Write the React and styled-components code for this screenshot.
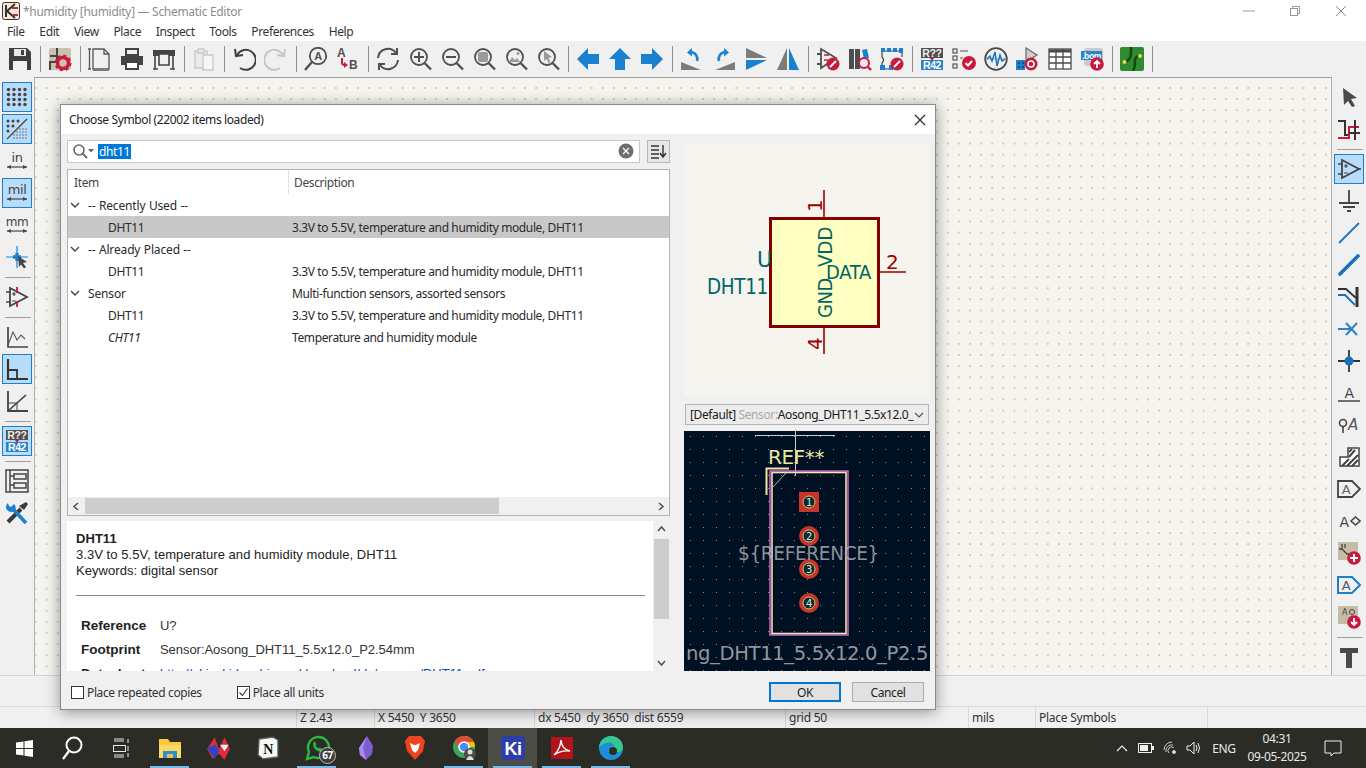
import React from "react";
import styled, { createGlobalStyle } from "styled-components";

const GlobalStyle = createGlobalStyle`
  html, body { margin: 0; padding: 0; background: #f0f0f0; overflow: hidden; }
  * { box-sizing: border-box; }
  body { font-family: "Noto Sans", "Open Sans", sans-serif; font-size: 12px; color: #1a1a1a; }
`;

const Page = styled.div`
  width: 1366px;
  height: 768px;
  position: relative;
  display: flex;
  flex-direction: column;
  overflow: hidden;
  letter-spacing: -0.38px;
`;

const TitleBar = styled.div`
  height: 22px;
  background: #fff;
  display: flex;
  align-items: center;
  padding: 0 2px 0 2px;
  color: #8c8c8c;
`;

const TitleText = styled.span`
  margin-left: 3px;
  flex: 1;
  letter-spacing: -0.3px;
`;

const WinButton = styled.div`
  width: 46px;
  height: 22px;
  display: flex;
  align-items: center;
  justify-content: center;
`;

const MenuBar = styled.div`
  height: 19px;
  background: #fff;
  display: flex;
  align-items: center;
  padding-left: 7px;
  gap: 14.7px;
  color: #333;
`;

const TopTools = styled.div`
  height: 36px;
  background: #f0f0f0;
  display: flex;
  align-items: center;
  padding-left: 4px;
`;

const Btn = styled.div`
  width: 32px;
  height: 32px;
  display: flex;
  align-items: center;
  justify-content: center;
  position: relative;
  &::before {
    content: "";
    display: ${(p) => (p.$active ? "block" : "none")};
    position: absolute;
    inset: 1px;
    background: #b9dcfb;
    border: 1.5px solid #1a7fd0;
  }
  & > svg { position: relative; }
`;

const VSep = styled.div`
  width: 8px;
  height: 26px;
  display: flex;
  justify-content: center;
  &::after { content: ""; width: 1px; background: #909090; }
`;

const HSep = styled.div`
  height: 8px;
  display: flex;
  align-items: center;
  justify-content: center;
  &::after { content: ""; height: 1px; width: 26px; background: #a0a0a0; }
`;

const Middle = styled.div`
  flex: 1;
  display: flex;
  min-height: 0;
`;

const SideTools = styled.div`
  width: ${(p) => p.$w}px;
  padding-top: 4px;
  padding-left: 1px;
  background: #f0f0f0;
`;

const Canvas = styled.div`
  flex: 1;
  border-top: 1px solid #a0a0a0;
  border-left: 1px solid #b0b0b0;
  border-right: 1px solid #b0b0b0;
  background-color: #f5f4ef;
  background-image: radial-gradient(circle at 1px 1px, #cac7be 0.7px, transparent 1px);
  background-size: 11.13px 11.13px;
  background-position: -0.5px 9px;
`;

const MessageBar = styled.div`
  height: 31px;
  background: #f0f0f0;
  border-top: 1px solid #d4d4d4;
`;

const StatusBar = styled.div`
  height: 22px;
  background: #f0f0f0;
  border-top: 1px solid #dcdcdc;
  display: flex;
  color: #333;
  letter-spacing: -0.25px;
`;

const StatusCell = styled.div`
  width: ${(p) => p.$w}px;
  display: flex;
  align-items: center;
  padding-left: 3px;
  border-left: ${(p) => (p.$first ? "none" : "1px solid #d8d8d8")};
  white-space: pre;
`;

const Taskbar = styled.div`
  height: 40px;
  background: #2b2c25;
  display: flex;
  align-items: center;
  color: #e8e8e8;
`;

const TaskBtn = styled.div`
  width: ${(p) => p.$w || 49}px;
  height: 40px;
  display: flex;
  align-items: center;
  justify-content: center;
  position: relative;
  background: ${(p) => (p.$active ? "#4b4c46" : "transparent")};
  &::after {
    content: "";
    display: ${(p) => (p.$running ? "block" : "none")};
    position: absolute;
    left: 5px;
    right: 5px;
    bottom: 0;
    height: 2px;
    background: #76b9ed;
  }
`;

const TaskBadge = styled.span`
  position: absolute;
  left: 27px;
  top: 19px;
  width: 17px;
  height: 17px;
  border-radius: 50%;
  background: #3c3c3c;
  border: 1px solid #bdbdbd;
  color: #fff;
  font-size: 10px;
  font-weight: 700;
  line-height: 15px;
  text-align: center;
  letter-spacing: -0.5px;
`;

const Tray = styled.div`
  margin-left: auto;
  display: flex;
  align-items: center;
  height: 40px;
  padding-right: 14px;
`;

const TrayIcon = styled.div`
  width: 24px;
  display: flex;
  justify-content: center;
`;

const TrayLang = styled.span`
  width: 36px;
  text-align: center;
  font-size: 12px;
`;

const Clock = styled.div`
  width: 70px;
  text-align: center;
  font-size: 12px;
  line-height: 18px;
`;

const Notify = styled.div`
  width: 38px;
  margin-left: 2px;
  display: flex;
  justify-content: center;
`;

const Dialog = styled.div`
  position: absolute;
  left: 60px;
  top: 104px;
  width: 876px;
  height: 606px;
  background: #f0f0f0;
  border: 1px solid #8a8a8a;
  box-shadow: 0 2px 14px rgba(0, 0, 0, 0.4);
  display: flex;
  flex-direction: column;
`;

const DialogTitle = styled.div`
  height: 29px;
  background: #fff;
  display: flex;
  align-items: center;
  justify-content: space-between;
  padding: 0 9px 0 8px;
  color: #222;
`;

const DialogBody = styled.div`
  flex: 1;
  min-height: 0;
  display: flex;
  padding: 5px 5px 0 6px;
  gap: 14px;
`;

const LeftPane = styled.div`
  width: 603px;
  display: flex;
  flex-direction: column;
`;

const SearchRow = styled.div`
  display: flex;
  height: 23px;
  flex-shrink: 0;
  gap: 7px;
  margin-top: 1px;
`;

const SearchBox = styled.div`
  flex: 1;
  background: #fff;
  border: 1px solid #c8c8c8;
  display: flex;
  align-items: center;
  padding: 0 5px 1px 4px;
`;

const Selected = styled.span`
  background: #0078d7;
  color: #fff;
  margin-left: 3px;
  padding: 0 1px;
  line-height: 15px;
`;

const ClearIcon = styled.svg`
  width: 16px;
  height: 16px;
  margin-left: auto;
`;

const SortBtn = styled.div`
  width: 23px;
  border: 1px solid #b8b8b8;
  background: #e6e6e6;
  display: flex;
  align-items: center;
  justify-content: center;
`;

const TreeBox = styled.div`
  height: 347px;
  flex-shrink: 0;
  margin-top: 6px;
  background: #fff;
  border: 1px solid #b4b4b4;
  display: flex;
  flex-direction: column;
`;

const TreeHead = styled.div`
  height: 24px;
  display: flex;
  color: #444;
`;

const HeadCell = styled.div`
  width: ${(p) => p.$w};
  padding-left: ${(p) => p.$pl}px;
  display: flex;
  align-items: center;
  border-right: ${(p) => (p.$line ? "1px solid #e4e4e4" : "none")};
`;

const Rows = styled.div`
  flex: 1;
`;

const Row = styled.div`
  height: 22px;
  display: flex;
  align-items: center;
  background: ${(p) => (p.$selected ? "#c8c8c8" : "transparent")};
  color: #2a2a2a;
`;

const RowItem = styled.div`
  width: 224px;
  display: flex;
  align-items: center;
  padding-left: ${(p) => (p.$group ? 2 : 40)}px;
  letter-spacing: ${(p) => (p.$group ? "-0.15px" : "inherit")};
  word-spacing: ${(p) => (p.$group ? "0.5px" : "normal")};
  font-style: ${(p) => (p.$italic ? "italic" : "normal")};
`;

const Chevron = styled.svg`
  width: 10px;
  height: 10px;
  margin-right: 8px;
`;

const HScroll = styled.div`
  height: 18px;
  background: #f0f0f0;
  display: flex;
  align-items: center;
`;

const ScrollArrow = styled.div`
  width: 17px;
  height: 17px;
  display: flex;
  align-items: center;
  justify-content: center;
`;

const HTrack = styled.div`
  flex: 1;
  height: 16px;
`;

const HThumb = styled.div`
  width: 414px;
  height: 100%;
  background: #cdcdcd;
`;

const Details = styled.div`
  height: 150px;
  flex-shrink: 0;
  margin-top: 5px;
  background: #fff;
  display: flex;
  overflow: hidden;
`;

const DetailsText = styled.div`
  flex: 1;
  overflow: hidden;
  padding: 10px 9px 0 9px;
  font-family: "Liberation Sans", Arial, sans-serif;
  font-size: 13px;
  line-height: 16px;
  letter-spacing: 0.05px;
  color: #222;
`;

const DetailsName = styled.div`
  font-weight: 700;
`;

const DetailsRule = styled.hr`
  border: 0;
  border-top: 1px solid #888;
  margin: 16px 0 18px;
`;

const Field = styled.div`
  display: flex;
  height: 24px;
  padding-left: 5px;
  align-items: center;
  white-space: nowrap;
`;

const FieldName = styled.span`
  width: 79px;
  font-weight: 700;
  font-size: 13.5px;
  letter-spacing: 0;
`;

const FieldValue = styled.span`
  color: ${(p) => p.$color || "#333"};
  letter-spacing: -0.05px;
`;

const VScroll = styled.div`
  width: 17px;
  margin-left: -1px;
  background: #f0f0f0;
  display: flex;
  flex-direction: column;
`;

const VThumb = styled.div`
  height: 80px;
  margin: 1px 1px 0;
  background: #cdcdcd;
`;

const VSpace = styled.div`
  flex: 1;
`;

const RightPane = styled.div`
  width: 246px;
  display: flex;
  flex-direction: column;
  padding-top: 5px;
`;

const SymbolPreview = styled.svg`
  width: 246px;
  height: 253px;
  flex-shrink: 0;
  display: block;
`;

const FootprintSelect = styled.div`
  height: 21px;
  flex-shrink: 0;
  margin: 7px 1px 6px;
  background: #ececec;
  border: 1px solid #b4b4b4;
  display: flex;
  align-items: center;
  padding: 0 4px;
  justify-content: space-between;
  white-space: pre;
`;

const Faded = styled.span`
  color: #aaa;
`;

const FootprintPreview = styled.svg`
  width: 246px;
  height: 240px;
  flex-shrink: 0;
  display: block;
`;

const DialogFoot = styled.div`
  height: 38px;
  flex-shrink: 0;
  display: flex;
  align-items: center;
  padding: 4px 11px 0 10px;
`;

const CheckLabel = styled.label`
  display: flex;
  align-items: center;
  gap: 3px;
  color: #333;
  margin-right: ${(p) => p.$mr || 0}px;
`;

const CheckBox = styled.span`
  width: 13px;
  height: 13px;
  border: 1px solid #333;
  background: #fff;
  display: flex;
  align-items: center;
  justify-content: center;
`;

const PushButton = styled.div`
  width: 72px;
  height: 20px;
  background: #e1e1e1;
  border: ${(p) => (p.$primary ? "2px solid #0078d7" : "1px solid #adadad")};
  display: flex;
  align-items: center;
  justify-content: center;
  margin-left: ${(p) => p.$ml};
  color: #222;
`;

const D = "#505050";
const BL = "#1a80d0";
const R = "#c8193f";

const Glyph = ({ children, size = 24 }) => (
  <svg width={size} height={size} viewBox="0 0 24 24">
    {children}
  </svg>
);

const Mag = ({ color = D }) => (
  <g fill="none" stroke={color} strokeWidth="1.8">
    <circle cx="11" cy="10" r="8" />
    <path d="M16.5 16 L23 22.5" strokeWidth="2.4" />
  </g>
);

const Badge = ({ cx = 18, cy = 18, r = 6, color = R }) => <circle cx={cx} cy={cy} r={r} fill={color} />;

const icons = {
  save: (
    <>
      <path d="M1 1h18l4 4v18H1z" fill="#3f3f3f" />
      <rect x="6" y="2" width="12" height="7" fill="#e8e8e8" />
      <rect x="13" y="3" width="3" height="5" fill="#3f3f3f" />
      <rect x="5" y="14" width="14" height="9" fill="#f0f0f0" />
    </>
  ),
  gear: (
    <>
      <rect x="1" y="1" width="22" height="22" rx="2" fill="#c9c2ad" />
      <path d="M9 1v8H2M9 15H2v8M9 9v6" stroke="#444" strokeWidth="2" fill="none" />
      <circle cx="15" cy="16" r="5.5" fill="none" stroke={R} strokeWidth="3.5" />
      <circle cx="15" cy="16" r="7.5" fill="none" stroke={R} strokeWidth="2" strokeDasharray="3 2.9" />
    </>
  ),
  page: (
    <g fill="none" stroke="#555" strokeWidth="1.3">
      <path d="M5 2h11l5 5v15H5z" />
      <path d="M16 2v5h5" />
      <path d="M1.5 2v20M0 2h3M0 22h3M5 24h16" />
    </g>
  ),
  print: (
    <>
      <path d="M6 2h12v6H6z" fill="none" stroke="#444" strokeWidth="2" />
      <path d="M1 9h22v9h-4v-3H5v3H1z" fill="#444" />
      <path d="M6 15h12v7H6z" fill="#fff" stroke="#444" strokeWidth="2" />
    </>
  ),
  plot: (
    <>
      <path d="M1 3h22v6H1z" fill="#444" />
      <path d="M3 9v13M21 9v13M1 22h5M18 22h5" stroke="#444" strokeWidth="1.6" fill="none" />
      <path d="M7 7h10v11H7z" fill="#f0f0f0" stroke="#444" strokeWidth="1.6" />
    </>
  ),
  paste: (
    <g fill="#ebebeb" stroke="#c8c8c8" strokeWidth="1.3">
      <path d="M3 4h12v17H3z" />
      <path d="M11 8h10v15H11z" fill="#f5f5f5" />
      <path d="M6 2h6v4H6z" />
    </g>
  ),
  undo: (
    <g fill="none" stroke="#404040" strokeWidth="2">
      <path d="M5 8 A10 10 0 1 1 8 21" />
      <path d="M3 2 L4 9 L11 8" />
    </g>
  ),
  redo: (
    <g fill="none" stroke="#c6c6c6" strokeWidth="2">
      <path d="M19 8 A10 10 0 1 0 16 21" />
      <path d="M21 2 L20 9 L13 8" />
    </g>
  ),
  find: (
    <>
      <g fill="none" stroke={D} strokeWidth="1.8">
        <circle cx="14" cy="9" r="8.2" />
        <path d="M8 15 L1 23" strokeWidth="2.4" />
      </g>
      <text x="14" y="13" textAnchor="middle" fontSize="11" fontWeight="700" fill={D} fontFamily="Liberation Sans">A</text>
    </>
  ),
  replace: (
    <>
      <text x="1" y="10" fontSize="12" fontWeight="700" fill={D} fontFamily="Liberation Sans">A</text>
      <text x="13" y="22" fontSize="12" fontWeight="700" fill={D} fontFamily="Liberation Sans">B</text>
      <path d="M6 11 v5 q0 2 3 2" fill="none" stroke={R} strokeWidth="2" />
      <path d="M8 15 l4 3 l-4 3z" fill={R} />
    </>
  ),
  refresh: (
    <g fill="none" stroke={D} strokeWidth="2">
      <path d="M2 11 A10 10 0 0 1 20 6" />
      <path d="M22 13 A10 10 0 0 1 4 18" />
      <path d="M21 1 V7 H15" />
      <path d="M3 23 V17 H9" />
    </g>
  ),
  zoomIn: (
    <>
      <Mag />
      <path d="M11 5v10M6 10h10" stroke={D} strokeWidth="2" />
    </>
  ),
  zoomOut: (
    <>
      <Mag />
      <path d="M6 10h10" stroke={D} strokeWidth="2" />
    </>
  ),
  zoomFit: (
    <>
      <Mag />
      <rect x="6" y="5" width="10" height="10" rx="2" fill="#9a9a9a" />
    </>
  ),
  zoomObj: (
    <>
      <Mag />
      <path d="M5 15l3-5 3 3 2-2 3 4z" fill="#9a9a9a" />
      <circle cx="14" cy="6.5" r="1.5" fill="#9a9a9a" />
    </>
  ),
  zoomSel: (
    <>
      <Mag />
      <path d="M8 4l8 6-3.5 1 2 4-2 1-2-4L8 14z" fill="#9a9a9a" />
    </>
  ),
  left: <path d="M1 12 L12 1 V7 H23 V17 H12 V23z" fill={BL} />,
  up: <path d="M12 1 L23 12 H17 V23 H7 V12 H1z" fill={BL} />,
  right: <path d="M23 12 L12 1 V7 H1 V17 H12 V23z" fill={BL} />,
  rotCcw: (
    <>
      <path d="M1 23 V15 L21 23z" fill="#7c7c7c" />
      <path d="M17 14 A7 7 0 0 0 11 5" fill="none" stroke={BL} strokeWidth="2.6" />
      <path d="M12 1 L7 5.5 L12 9.5z" fill={BL} />
    </>
  ),
  rotCw: (
    <>
      <path d="M23 23 V15 L3 23z" fill="#7c7c7c" />
      <path d="M7 14 A7 7 0 0 1 13 5" fill="none" stroke={BL} strokeWidth="2.6" />
      <path d="M12 1 L17 5.5 L12 9.5z" fill={BL} />
    </>
  ),
  mirrorV: (
    <>
      <path d="M2 1 L23 11 H2z" fill="#7c7c7c" />
      <path d="M2 23 L23 13 H2z" fill={BL} />
    </>
  ),
  mirrorH: (
    <>
      <path d="M11 1 V23 H1z" fill="#7c7c7c" />
      <path d="M13 1 V23 H23z" fill={BL} />
    </>
  ),
  symCheck: (
    <>
      <path d="M5 2 V21 L20 11z" fill="none" stroke={D} strokeWidth="1.8" />
      <path d="M1 7h4M1 17h4" stroke={D} strokeWidth="1.8" />
      <path d="M8 8h5M8 13h4" stroke={R} strokeWidth="1.5" />
      <Badge cx={17} cy={17} r={6.5} />
      <path d="M14 20 L20 14" stroke="#fff" strokeWidth="2" />
    </>
  ),
  libs: (
    <>
      <path d="M1 2h5v20H1zM7 2h5v20H7z" fill="#4d4d4d" />
      <path d="M14 3l5-1 2 9-5 1z" fill={BL} />
      <circle cx="16" cy="16" r="5" fill="#f0e6ee" stroke={R} strokeWidth="2" />
      <path d="M20 20l3 3" stroke={R} strokeWidth="2.4" />
    </>
  ),
  hierCheck: (
    <>
      <path d="M3 4h18M2 4v6q3 3 0 6v6M3 22h6M22 4v6" fill="none" stroke="#444" strokeWidth="1.2" />
      <path d="M1 1h4v4H1zM7 1h4v4H7zM13 1h4v4h-4zM19 1h4v5h-4zM0 18h5v5H0zM9 18h4v5H9z" fill={BL} />
      <Badge cx={17} cy={17} r={6.5} />
      <path d="M14 20 L20 14" stroke="#fff" strokeWidth="2" />
    </>
  ),
  annotate: (
    <>
      <rect x="1" y="1" width="22" height="10" fill="#505050" />
      <rect x="1" y="13" width="22" height="10" fill="#2b84c9" />
      <text x="12" y="10" textAnchor="middle" fontSize="10.5" fontWeight="700" fill="#eee" fontFamily="Liberation Sans">R??</text>
      <text x="12" y="22" textAnchor="middle" fontSize="10.5" fontWeight="700" fill="#fff" fontFamily="Liberation Sans">R42</text>
      <path d="M9.5 10.5 H14.5 L12 14z" fill={R} />
    </>
  ),
  erc: (
    <>
      <g fill="none" stroke="#555" strokeWidth="1.2">
        <rect x="1" y="2" width="4" height="4" />
        <rect x="1" y="9" width="4" height="4" />
        <rect x="1" y="17" width="4" height="4" />
      </g>
      <path d="M8 4h8M8 11h3" stroke="#555" strokeWidth="1.2" />
      <Badge cx={17} cy={16} r={7} />
      <path d="M13.5 16l2.5 2.5 4-4.5" fill="none" stroke="#fff" strokeWidth="2" />
    </>
  ),
  sim: (
    <>
      <circle cx="12" cy="12" r="10.8" fill="none" stroke="#4a4a4a" strokeWidth="1.8" />
      <path d="M3 12 H22" stroke="#999" strokeWidth="1" />
      <path d="M3 12 L6 9 L8 14 L11 5 L13 19 L16 8 L18 14 L21 12" fill="none" stroke="#1c74b8" strokeWidth="1.5" />
    </>
  ),
  fpAssign: (
    <>
      <path d="M10 1 V15 L21 8z" fill="#cfcfcf" stroke="#666" strokeWidth="1.2" />
      <path d="M0 13h9v10H0z" fill={BL} />
      <path d="M2 15h2v2H2zM6 15h2v2H6zM2 19h2v2H2zM6 19h2v2H6z" fill="#13507f" />
      <Badge cx={15} cy={17} r={6.5} />
      <circle cx="15" cy="17" r="3" fill="none" stroke="#fff" strokeWidth="1.6" />
    </>
  ),
  table: (
    <g fill="#fff" stroke="#4a4a4a" strokeWidth="1.3">
      <rect x="1" y="2" width="22" height="20" />
      <path d="M1 4h22" strokeWidth="3" />
      <path d="M1 10h22M1 16h22M8 2v20M15 2v20" />
    </g>
  ),
  bom: (
    <>
      <rect x="4" y="1" width="19" height="18" rx="3" fill="#c9c9cf" />
      <rect x="1" y="4" width="21" height="9" fill="#2b84c9" />
      <text x="11.5" y="11.5" textAnchor="middle" fontSize="8.5" fontWeight="700" fill="#fff" fontFamily="Liberation Sans">.bom</text>
      <Badge cx={17} cy={17} r={6.8} />
      <path d="M17 21v-7M14 17l3-3 3 3" fill="none" stroke="#fff" strokeWidth="1.8" />
    </>
  ),
  pcb: (
    <>
      <rect x="0" y="0" width="24" height="24" rx="2" fill="#2f8a30" />
      <path d="M5 15 Q11 13 11 6 V0 M19 9 Q14 10 15 16 Q15 20 13 24" fill="none" stroke="#0d4d12" strokeWidth="2.5" />
      <circle cx="4.5" cy="15" r="2" fill="#e8d84a" />
      <circle cx="20" cy="9" r="2" fill="#e8d84a" />
    </>
  ),
  gridDots: (
    <g fill="#444">
      {[4, 9, 14, 19].map((y) =>
        [3, 8.5, 14, 19.5].map((x) => <circle key={`${x}-${y}`} cx={x + 0.5} cy={y + 0.5} r="1.7" />),
      )}
    </g>
  ),
  gridOverride: (
    <>
      <g fill="#444">
        {[4, 9, 14].map((y) => [3, 8, 13].map((x) => (x + y < 20 ? <circle key={`${x}-${y}`} cx={x} cy={y} r="1.5" /> : null)))}
      </g>
      <g fill="#666">
        {[12, 15, 18, 21].map((y) =>
          [9, 12, 15, 18, 21].map((x) => (x + y > 26 ? <circle key={`${x}-${y}`} cx={x} cy={y} r="0.8" /> : null)),
        )}
      </g>
      <path d="M2 22 L22 2" stroke="#444" strokeWidth="1.3" />
    </>
  ),
  unitIn: (
    <>
      <text x="12" y="13" textAnchor="middle" fontSize="13" fontFamily="DejaVu Sans" fill="#444">in</text>
      <path d="M2 18 H22" stroke="#444" strokeWidth="1.2" />
      <path d="M2 18 l4-2v4zM22 18 l-4-2v4z" fill="#444" />
    </>
  ),
  unitMil: (
    <>
      <text x="12" y="13" textAnchor="middle" fontSize="13" fontFamily="DejaVu Sans" fill="#444">mil</text>
      <path d="M2 18 H22" stroke="#444" strokeWidth="1.2" />
      <path d="M2 18 l4-2v4zM22 18 l-4-2v4z" fill="#444" />
    </>
  ),
  unitMm: (
    <>
      <text x="12" y="13" textAnchor="middle" fontSize="12" fontFamily="DejaVu Sans" fill="#444">mm</text>
      <path d="M2 18 H22" stroke="#444" strokeWidth="1.2" />
      <path d="M2 18 l4-2v4zM22 18 l-4-2v4z" fill="#444" />
    </>
  ),
  crosshair: (
    <>
      <path d="M12 1 V23 M1 12 H23" stroke={BL} strokeWidth="1.2" />
      <path d="M12 8 V16 M8 12 H16" stroke={BL} strokeWidth="3.4" />
      <path d="M13 11 L22 17 L18 18 L21 22 L19 23.5 L16 19.5 L14 22z" fill="#454545" />
    </>
  ),
  opamp: (
    <>
      <path d="M5 3 V21 L22 12z" fill="none" stroke="#444" strokeWidth="1.8" />
      <path d="M1 7h4M1 17h4" stroke="#444" strokeWidth="1.6" />
      <path d="M12 2v6M12 16v6" stroke={R} strokeWidth="1.8" />
      <path d="M7 9h4M9 7v4M7 16h4" stroke="#444" strokeWidth="1.2" />
    </>
  ),
  plotFree: (
    <>
      <path d="M3 2 V22 H23" fill="none" stroke="#444" strokeWidth="1.7" />
      <path d="M3 20 L8 7 L12 15 L16 10 L20 14" fill="none" stroke="#555" strokeWidth="1.1" />
    </>
  ),
  plotH: (
    <>
      <path d="M3 2 V22 H23" fill="none" stroke="#333" strokeWidth="2.2" />
      <path d="M3 13 H12 V22" fill="none" stroke="#333" strokeWidth="1.8" />
    </>
  ),
  plot45: (
    <>
      <path d="M3 2 V22 H23" fill="none" stroke="#444" strokeWidth="1.8" />
      <path d="M3 22 L21 6" fill="none" stroke="#444" strokeWidth="1.6" />
      <path d="M3 14 H12 V22" fill="none" stroke="#444" strokeWidth="1" />
    </>
  ),
  hierNav: (
    <g fill="none" stroke="#444" strokeWidth="1.5">
      <rect x="1" y="1" width="22" height="22" />
      <path d="M5 1v22" />
      <rect x="9" y="5" width="12" height="5" />
      <rect x="9" y="14" width="12" height="5" />
      <path d="M5 7h4M5 16h4" />
    </g>
  ),
  tools: (
    <>
      <path d="M3 21 L16 8" stroke="#3a3a3a" strokeWidth="4" />
      <path d="M14 5 L21 1 L23 3 L19 9z" fill="#3a3a3a" />
      <path d="M21 22 L8 8" stroke={BL} strokeWidth="3.6" />
      <path d="M3 2 A5.5 5.5 0 0 0 2 9 A5.5 5.5 0 0 0 9.5 10 A5.5 5.5 0 0 0 9 3 L6 6 L4 5z" fill={BL} />
    </>
  ),
  cursor: <path d="M6 3 L20 13 L14 14 L18 21 L15 22 L11 16 L7 20z" fill="#4a4a4a" />,
  route: (
    <>
      <path d="M1 4h7v14h4" fill="none" stroke="#333" strokeWidth="2" />
      <path d="M1 21h11V10h10" fill="none" stroke={R} strokeWidth="2" />
      <path d="M18 3v20M12 16h11" stroke="#333" strokeWidth="2" />
    </>
  ),
  symbol: (
    <>
      <path d="M5 3 V21 L22 12z" fill="none" stroke="#444" strokeWidth="1.8" />
      <path d="M1 7h4M1 17h4M22 12h2" stroke="#444" strokeWidth="1.6" />
      <path d="M7 9h4M9 7v4M7 16h4" stroke="#444" strokeWidth="1.2" />
    </>
  ),
  ground: <path d="M12 1 V14 M2 14 H22 M6 18 H18 M10 22 H14" stroke="#444" strokeWidth="1.8" fill="none" />,
  wire: <path d="M2 22 L22 2" stroke="#2377b8" strokeWidth="1.9" />,
  bus: <path d="M3 21 L21 3" stroke="#1a70b8" strokeWidth="3.6" strokeLinecap="round" />,
  busEntry: (
    <>
      <path d="M20 2 V22" stroke="#333" strokeWidth="3" />
      <path d="M1 4 H9 L19 13" fill="none" stroke="#333" strokeWidth="1.8" />
      <path d="M1 10 H8 L18 20" fill="none" stroke="#1a70b8" strokeWidth="1.8" />
    </>
  ),
  noConnect: <path d="M1 12 H15 M9 6 L20 18 M20 6 L9 18" stroke="#2b84c9" strokeWidth="2" />,
  junction: (
    <>
      <path d="M12 1 V23 M1 12 H23" stroke="#333" strokeWidth="1.8" />
      <circle cx="12" cy="12" r="4.5" fill="#1a70b8" />
    </>
  ),
  label: (
    <>
      <text x="12" y="17" textAnchor="middle" fontSize="14" fontFamily="DejaVu Sans" fill="#444">A</text>
      <path d="M1 20 H23" stroke="#444" strokeWidth="1.5" />
    </>
  ),
  netclass: (
    <>
      <circle cx="6" cy="10" r="3.5" fill="none" stroke="#444" strokeWidth="1.6" />
      <path d="M6 14 V20" stroke="#444" strokeWidth="1.6" />
      <text x="16" y="17" textAnchor="middle" fontSize="15" fontStyle="italic" fontFamily="DejaVu Sans" fill="#555">A</text>
    </>
  ),
  rule: (
    <>
      <path d="M3 21 V12 H11 V3 H22 V21z" fill="#fff" stroke="#444" strokeWidth="1.5" />
      <path d="M5 21L12 14M10 21L21 10M15 21L21 15M12 12L18 5M12 7l3-3" stroke="#444" strokeWidth="2" />
    </>
  ),
  globalLabel: (
    <>
      <path d="M1 4 H15 L23 12 L15 20 H1z" fill="none" stroke="#444" strokeWidth="1.8" />
      <text x="9" y="17" textAnchor="middle" fontSize="13" fontFamily="DejaVu Sans" fill="#666">A</text>
    </>
  ),
  hierLabel: (
    <>
      <text x="7" y="18" textAnchor="middle" fontSize="14" fontFamily="DejaVu Sans" fill="#444">A</text>
      <path d="M14 12 L18.5 8 L23 12 L18.5 16z" fill="none" stroke="#444" strokeWidth="1.6" />
    </>
  ),
  sheet: (
    <>
      <rect x="1" y="1" width="20" height="18" rx="1" fill="#c4bca6" />
      <path d="M5 3v5H2M5 8l5 5h4M8 3v4" fill="none" stroke="#444" strokeWidth="1.3" />
      <Badge cx={17} cy={17} r={6.8} />
      <path d="M17 13v8M13 17h8" stroke="#fff" strokeWidth="2" />
    </>
  ),
  sheetPin: (
    <>
      <path d="M1 4 H15 L23 12 L15 20 H1z" fill="none" stroke={BL} strokeWidth="2" />
      <text x="9" y="17" textAnchor="middle" fontSize="13" fontFamily="DejaVu Sans" fill="#555">A</text>
    </>
  ),
  importPins: (
    <>
      <rect x="1" y="1" width="20" height="18" rx="1" fill="#c4bca6" />
      <text x="5" y="10" fontSize="8" fontFamily="DejaVu Sans" fill="#444">A</text>
      <circle cx="15" cy="7" r="2.5" fill="none" stroke="#444" />
      <Badge cx={17} cy={17} r={6.8} />
      <path d="M17 13v7M14 17l3 3 3-3" fill="none" stroke="#fff" strokeWidth="1.8" />
    </>
  ),
  text: <path d="M3 3 H21 V8 H15 V23 H9 V8 H3z" fill="#4a4a4a" />,
};

const topTools = [
  ["save"], "|", ["gear"], "|", ["page"], ["print"], ["plot"], "|", ["paste"], "|", ["undo"], ["redo"], "|",
  ["find"], ["replace"], "|", ["refresh"], ["zoomIn"], ["zoomOut"], ["zoomFit"], ["zoomObj"], ["zoomSel"], "|",
  ["left"], ["up"], ["right"], "|", ["rotCcw"], ["rotCw"], ["mirrorV"], ["mirrorH"], "|",
  ["symCheck"], ["libs"], ["hierCheck"], "|", ["annotate"], ["erc"], ["sim"], ["fpAssign"], ["table"], ["bom"], "|",
  ["pcb"], "|",
];

const leftTools = [
  ["gridDots", 1], ["gridOverride", 1], ["unitIn"], ["unitMil", 1], ["unitMm"], ["crosshair"], "|", ["opamp"], "|",
  ["plotFree"], ["plotH", 1], ["plot45"], "|", ["annotate", 1], "|", ["hierNav"], ["tools"],
];

const rightTools = [
  ["cursor"], ["route"], "|", ["symbol", 1], ["ground"], ["wire"], ["bus"], ["busEntry"], ["noConnect"], ["junction"],
  ["label"], ["netclass"], ["rule"], ["globalLabel"], ["hierLabel"], ["sheet"], ["sheetPin"], ["importPins"], "|", ["text"],
];

const ToolList = ({ items, horizontal }) =>
  items.map((it, i) => {
    if (it === "|") return horizontal ? <VSep key={i} /> : <HSep key={i} />;
    return (
      <Btn key={i} $active={it[1]}>
        <Glyph>{icons[it[0]]}</Glyph>
      </Btn>
    );
  });

const KicadLogo = () => (
  <svg width="18" height="18" viewBox="0 0 18 18">
    <rect x="0.5" y="0.5" width="17" height="17" rx="2" fill="#f3e8dc" stroke="#4a2a20" />
    <path d="M4 3v12M13 2 L5 9 L13 16" fill="none" stroke="#333" strokeWidth="2" />
    <path d="M10 6 h6 M11 13 h5" stroke="#b4323a" strokeWidth="2" />
  </svg>
);

const TreeChevron = () => (
  <Chevron viewBox="0 0 10 10">
    <path d="M1 3 L5 7 L9 3" fill="none" stroke="#444" strokeWidth="1.4" />
  </Chevron>
);

const Arrow = ({ d }) => (
  <svg width="9" height="9" viewBox="0 0 9 9">
    <path d={d} fill="none" stroke="#555" strokeWidth="1.6" />
  </svg>
);

const treeRows = [
  { item: "-- Recently Used --", group: true },
  { item: "DHT11", desc: "3.3V to 5.5V, temperature and humidity module, DHT11", selected: true },
  { item: "-- Already Placed --", group: true },
  { item: "DHT11", desc: "3.3V to 5.5V, temperature and humidity module, DHT11" },
  { item: "Sensor", desc: "Multi-function sensors, assorted sensors", group: true },
  { item: "DHT11", desc: "3.3V to 5.5V, temperature and humidity module, DHT11" },
  { item: "CHT11", desc: "Temperature and humidity module", italic: true },
];

const SCH = "#006464";
const PIN = "#a00000";

const SymbolDrawing = () => (
  <SymbolPreview viewBox="684 144 246 253">
    <rect x="684" y="144" width="246" height="253" fill="#f5f4ef" />
    <path d="M824 190V218M824 327V354M879 272H906" stroke={PIN} strokeWidth="1.6" />
    <rect x="770.5" y="218.5" width="108" height="108" fill="#ffffc2" stroke="#840000" strokeWidth="3" />
    <g fontFamily="DejaVu Sans" fontSize="20" fill={SCH}>
      <text x="757" y="267" fontSize="21">U</text>
      <text x="707" y="294" fontSize="21" textLength="61" lengthAdjust="spacingAndGlyphs">DHT11</text>
      <text x="826" y="279" textLength="45" lengthAdjust="spacingAndGlyphs">DATA</text>
      <text transform="translate(832 318) rotate(-90)" textLength="40" lengthAdjust="spacingAndGlyphs">GND</text>
      <text transform="translate(832 267) rotate(-90)" textLength="40" lengthAdjust="spacingAndGlyphs">VDD</text>
    </g>
    <g fontFamily="DejaVu Sans" fontSize="20" fill={PIN}>
      <text x="886" y="269">2</text>
      <text transform="translate(822 212) rotate(-90)">1</text>
      <text transform="translate(822 350) rotate(-90)">4</text>
    </g>
  </SymbolPreview>
);

const Pad = ({ y, n, square }) => (
  <g>
    {square ? <rect x="799" y={y - 10} width="20" height="20" fill="#c83428" /> : <circle cx="809" cy={y} r="10" fill="#c83428" />}
    <circle cx="809" cy={y} r="6" fill="#0c2a2a" stroke="#c8c878" strokeWidth="1" />
    <text x="809" y={y + 3.5} textAnchor="middle" fontSize="10" fill="#dfe8e8" fontFamily="DejaVu Sans">{n}</text>
  </g>
);

const FootprintDrawing = () => (
  <FootprintPreview viewBox="684 431 246 240">
    <defs>
      <pattern id="fpgrid" x="690" y="436" width="13" height="13" patternUnits="userSpaceOnUse">
        <rect x="0" y="0" width="1" height="1" fill="#7c8694" />
      </pattern>
    </defs>
    <rect x="684" y="431" width="246" height="240" fill="#001023" />
    <rect x="684" y="431" width="246" height="240" fill="url(#fpgrid)" />
    <path d="M755 435.5H835M795.5 431V476" stroke="#c8ccd0" strokeWidth="1" />
    <text x="768" y="464" fontFamily="DejaVu Sans" fontSize="20" fill="#e8e6a0" textLength="56" lengthAdjust="spacingAndGlyphs">REF**</text>
    <path d="M766.5 495V468.5H789" fill="none" stroke="#e8e6a0" strokeWidth="2" />
    <rect x="770" y="471" width="78" height="164" fill="none" stroke="#c75cc0" strokeWidth="1.6" />
    <rect x="772" y="472.5" width="74" height="161" fill="none" stroke="#e8e8b0" strokeWidth="1.6" />
    <path d="M773 487L786 473" stroke="#b0b0a0" strokeWidth="1" />
    <Pad y={502} n="1" square />
    <Pad y={536} n="2" />
    <Pad y={569} n="3" />
    <Pad y={603} n="4" />
    <text x="738" y="560" fontFamily="DejaVu Sans" fontSize="20" fill="#a8acb0" fillOpacity="0.85" textLength="141" lengthAdjust="spacingAndGlyphs">{"${REFERENCE}"}</text>
    <text x="686" y="660" fontFamily="DejaVu Sans" fontSize="20" fill="#9295a0" textLength="242" lengthAdjust="spacingAndGlyphs">ng_DHT11_5.5x12.0_P2.5</text>
  </FootprintPreview>
);

const task = {
  start: (
    <svg width="17" height="17" viewBox="0 0 17 17">
      <path d="M0 2.5 L7.5 1.4 V8 H0z M8.5 1.2 L17 0 V8 H8.5z M0 9 H7.5 V15.6 L0 14.5z M8.5 9 H17 V17 L8.5 15.8z" fill="#fff" />
    </svg>
  ),
  search: (
    <svg width="22" height="24" viewBox="0 0 22 24">
      <circle cx="13" cy="9" r="7.5" fill="none" stroke="#fff" strokeWidth="2" />
      <path d="M8 15 L2 23" stroke="#fff" strokeWidth="2.2" />
    </svg>
  ),
  view: (
    <svg width="18" height="20" viewBox="0 0 18 20" fill="none" stroke="#e8e8e8">
      <path d="M2 1h10M2 3h10M16 1v4M2 19h10M2 17h10M16 15v4" />
      <rect x="1.5" y="7.5" width="12" height="6" />
      <path d="M16 8v5" />
    </svg>
  ),
  folder: (
    <svg width="24" height="24" viewBox="0 0 24 24">
      <path d="M1 3h9l2 3h11v16H1z" fill="#f6c93e" />
      <rect x="1" y="9" width="22" height="13" fill="#fbd765" />
      <rect x="5" y="15" width="14" height="7" fill="#2a8fd4" />
      <rect x="9" y="18" width="6" height="4" fill="#e8c24c" />
    </svg>
  ),
  ally: (
    <svg width="26" height="26" viewBox="0 0 24 24">
      <path d="M8 2 L12 13 L17 2 L22 13 L17 23 L12 17 L6 22 L1 13z" fill="#e02a3c" />
      <path d="M1 12 L9 9 L12 15 L8 22z" fill="#2746c8" />
      <path d="M13 9 L21 9 L17 15z" fill="#f2f2f2" />
    </svg>
  ),
  notion: (
    <svg width="22" height="24" viewBox="0 0 22 24">
      <path d="M2 3 L16 1 L21 4 V21 L6 23 L1 19z" fill="#f7f7f7" stroke="#555" strokeWidth="1.4" />
      <text x="11" y="18" textAnchor="middle" fontSize="14" fontWeight="700" fontFamily="Liberation Serif" fill="#111">N</text>
    </svg>
  ),
  whatsapp: (
    <svg width="26" height="26" viewBox="0 0 26 26">
      <path d="M3 24 L5 17 A10.5 10.5 0 1 1 10 22z" fill="none" stroke="#2cb742" strokeWidth="2.4" />
      <path d="M9 8 q0 8 8 9 l1.5-3 -3-1.5 -1 1 q-2-1-3-3 l1-1 -1.5-3z" fill="#2cb742" />
    </svg>
  ),
  obsidian: (
    <svg width="20" height="26" viewBox="0 0 20 26">
      <path d="M11 1 L17 11 L16 19 L10 25 L4 20 L3 13z" fill="#7c5ccf" />
      <path d="M11 1 L7 12 L10 25 L4 20 L3 13z" fill="#a78bf0" />
    </svg>
  ),
  brave: (
    <svg width="22" height="26" viewBox="0 0 22 26">
      <path d="M5 1 H17 L21 6 L19 16 L11 25 L3 16 L1 6z" fill="#f0441e" />
      <path d="M6 8 L10 10 H12 L16 8 L14 15 L11 18 L8 15z" fill="#fff" />
    </svg>
  ),
  chrome: (
    <svg width="26" height="26" viewBox="0 0 26 26">
      <circle cx="13" cy="12" r="11" fill="#3ba55c" />
      <path d="M13 1 A11 11 0 0 1 24 12 H13z" fill="#f4c20d" />
      <path d="M13 1 A11 11 0 0 0 3.5 6.5 L9 13 L13 7 H23 A11 11 0 0 0 13 1z" fill="#dd4b39" />
      <circle cx="13" cy="12" r="5" fill="#4a8af4" stroke="#fff" strokeWidth="1.6" />
      <circle cx="19" cy="19" r="6" fill="#4a4a4a" />
      <path d="M15 25 q4-8 8 0z" fill="#ddd" />
      <circle cx="19" cy="17" r="2.5" fill="#ddd" />
    </svg>
  ),
  kicad: (
    <svg width="26" height="26" viewBox="0 0 26 26">
      <rect x="1" y="1" width="24" height="24" rx="3" fill="#2c3ea8" />
      <text x="13" y="20" textAnchor="middle" fontSize="18" fontWeight="700" fontFamily="Liberation Sans" fill="#fff">Ki</text>
    </svg>
  ),
  acrobat: (
    <svg width="24" height="24" viewBox="0 0 24 24">
      <rect x="1" y="1" width="22" height="22" fill="#b3141c" />
      <path d="M4 19 Q10 14 11 4 Q12 14 20 15 Q11 14 4 19z" fill="none" stroke="#fff" strokeWidth="1.4" />
    </svg>
  ),
  edge: (
    <svg width="26" height="26" viewBox="0 0 26 26">
      <circle cx="13" cy="13" r="12" fill="#1a8fd8" />
      <path d="M1 13 A12 12 0 0 1 25 13 Q25 17 20 17 H10 Q11 11 17 11 Q14 6 8 8 Q2 10 1 13z" fill="#35c88e" />
      <circle cx="15" cy="16" r="4" fill="#2b2c25" />
    </svg>
  ),
};

const taskApps = [
  { k: "folder", running: true },
  { k: "ally" },
  { k: "notion" },
  { k: "whatsapp", running: true, badge: "67" },
  { k: "obsidian" },
  { k: "brave" },
  { k: "chrome", running: true },
  { k: "kicad", running: true, active: true },
  { k: "acrobat", running: true },
  { k: "edge", running: true },
];

const App = () => (
  <Page>
    <GlobalStyle />
    <TitleBar>
      <KicadLogo />
      <TitleText>*humidity [humidity] — Schematic Editor</TitleText>
      <WinButton>
        <svg width="12" height="2" viewBox="0 0 12 2"><path d="M0 1H12" stroke="#999" /></svg>
      </WinButton>
      <WinButton>
        <svg width="12" height="12" viewBox="0 0 12 12" fill="none" stroke="#999"><rect x="1.5" y="3.5" width="7" height="7" /><path d="M3.5 3.5V1.5H10.5V8.5H8.5" /></svg>
      </WinButton>
      <WinButton>
        <svg width="12" height="12" viewBox="0 0 12 12" fill="none" stroke="#888"><path d="M1 1L11 11M11 1L1 11" /></svg>
      </WinButton>
    </TitleBar>
    <MenuBar>
      {["File", "Edit", "View", "Place", "Inspect", "Tools", "Preferences", "Help"].map((m) => (
        <span key={m}>{m}</span>
      ))}
    </MenuBar>
    <TopTools>
      <ToolList items={topTools} horizontal />
    </TopTools>
    <Middle>
      <SideTools $w={34}>
        <ToolList items={leftTools} />
      </SideTools>
      <Canvas />
      <SideTools $w={34}>
        <ToolList items={rightTools} />
      </SideTools>
    </Middle>
    <MessageBar />
    <StatusBar>
      <StatusCell $w={296} $first />
      <StatusCell $w={78}>Z 2.43</StatusCell>
      <StatusCell $w={160}>X 5450  Y 3650</StatusCell>
      <StatusCell $w={251}>dx 5450  dy 3650  dist 6559</StatusCell>
      <StatusCell $w={183}>grid 50</StatusCell>
      <StatusCell $w={67}>mils</StatusCell>
      <StatusCell $w={172}>Place Symbols</StatusCell>
      <StatusCell $w={159} />
    </StatusBar>
    <Taskbar>
      <TaskBtn $w={48}>{task.start}</TaskBtn>
      <TaskBtn $w={48}>{task.search}</TaskBtn>
      <TaskBtn $w={49}>{task.view}</TaskBtn>
      {taskApps.map((a) => (
        <TaskBtn key={a.k} $running={a.running} $active={a.active}>
          {task[a.k]}
          {a.badge && <TaskBadge>{a.badge}</TaskBadge>}
        </TaskBtn>
      ))}
      <Tray>
        <TrayIcon>
          <svg width="12" height="8" viewBox="0 0 12 8"><path d="M1 7L6 2L11 7" fill="none" stroke="#eee" strokeWidth="1.2" /></svg>
        </TrayIcon>
        <TrayIcon>
          <svg width="16" height="10" viewBox="0 0 16 10"><rect x="0.5" y="0.5" width="13" height="9" fill="none" stroke="#eee" /><rect x="2" y="2" width="8" height="6" fill="#eee" /><rect x="14" y="3" width="2" height="4" fill="#eee" /></svg>
        </TrayIcon>
        <TrayIcon>
          <svg width="14" height="14" viewBox="0 0 14 14" fill="none" stroke="#ccc"><path d="M1 9A8 8 0 0 1 9 1M3 11A6 6 0 0 1 10 4M6 12A3 3 0 0 1 11 7" /><circle cx="11" cy="11" r="1.5" fill="#eee" /></svg>
        </TrayIcon>
        <TrayIcon>
          <svg width="16" height="14" viewBox="0 0 16 14" fill="none" stroke="#eee"><path d="M1 5H4L8 1V13L4 9H1z" /><path d="M10 4Q12 7 10 10M12 2Q15 7 12 12" /></svg>
        </TrayIcon>
        <TrayLang>ENG</TrayLang>
        <Clock>
          <div>04:31</div>
          <div>09-05-2025</div>
        </Clock>
        <Notify>
          <svg width="18" height="17" viewBox="0 0 18 17"><path d="M1 1H17V13H10L7 16V13H1z" fill="none" stroke="#eee" /></svg>
        </Notify>
      </Tray>
    </Taskbar>

    <Dialog>
      <DialogTitle>
        <span>Choose Symbol (22002 items loaded)</span>
        <svg width="12" height="12" viewBox="0 0 12 12"><path d="M1 1L11 11M11 1L1 11" stroke="#222" strokeWidth="1.1" /></svg>
      </DialogTitle>
      <DialogBody>
        <LeftPane>
          <SearchRow>
            <SearchBox>
              <svg width="23" height="16" viewBox="0 0 23 16">
                <circle cx="7" cy="7" r="5" fill="none" stroke="#666" strokeWidth="1.6" />
                <path d="M10.5 10.5L15 15" stroke="#666" strokeWidth="1.8" />
                <path d="M16 6H22L19 9.5z" fill="#666" />
              </svg>
              <Selected>dht11</Selected>
              <ClearIcon viewBox="0 0 16 16">
                <circle cx="8" cy="8" r="7.5" fill="#6e6e6e" />
                <path d="M5 5L11 11M11 5L5 11" stroke="#fff" strokeWidth="1.3" />
              </ClearIcon>
            </SearchBox>
            <SortBtn>
              <svg width="17" height="15" viewBox="0 0 17 15">
                <path d="M1 2H9M1 6H9M1 10H9M1 14H9" stroke="#333" strokeWidth="1.3" />
                <path d="M13 1V12M10 9L13 13L16 9" fill="none" stroke="#333" strokeWidth="1.4" />
              </svg>
            </SortBtn>
          </SearchRow>
          <TreeBox>
            <TreeHead>
              <HeadCell $w="221px" $pl={6} $line>Item</HeadCell>
              <HeadCell $w="300px" $pl={5}>Description</HeadCell>
            </TreeHead>
            <Rows>
              {treeRows.map((r, i) => (
                <Row key={i} $selected={r.selected}>
                  <RowItem $group={r.group} $italic={r.italic}>
                    {r.group && <TreeChevron />}
                    {r.item}
                  </RowItem>
                  <span>{r.desc}</span>
                </Row>
              ))}
            </Rows>
            <HScroll>
              <ScrollArrow><Arrow d="M6 1L2 4.5L6 8" /></ScrollArrow>
              <HTrack><HThumb /></HTrack>
              <ScrollArrow><Arrow d="M3 1L7 4.5L3 8" /></ScrollArrow>
            </HScroll>
          </TreeBox>
          <Details>
            <DetailsText>
              <DetailsName>DHT11</DetailsName>
              <div>3.3V to 5.5V, temperature and humidity module, DHT11</div>
              <div>Keywords: digital sensor</div>
              <DetailsRule />
              <Field>
                <FieldName>Reference</FieldName>
                <FieldValue>U?</FieldValue>
              </Field>
              <Field>
                <FieldName>Footprint</FieldName>
                <FieldValue>Sensor:Aosong_DHT11_5.5x12.0_P2.54mm</FieldValue>
              </Field>
              <Field>
                <FieldName>Datasheet</FieldName>
                <FieldValue $color="#0645ad">http://akizukidenshi.com/download/ds/aosong/DHT11.pdf</FieldValue>
              </Field>
            </DetailsText>
            <VScroll>
              <ScrollArrow><Arrow d="M1 6L4.5 2L8 6" /></ScrollArrow>
              <VThumb />
              <VSpace />
              <ScrollArrow><Arrow d="M1 3L4.5 7L8 3" /></ScrollArrow>
            </VScroll>
          </Details>
        </LeftPane>
        <RightPane>
          <SymbolDrawing />
          <FootprintSelect>
            <span>[Default] <Faded>Sensor:</Faded>Aosong_DHT11_5.5x12.0_</span>
            <svg width="10" height="8" viewBox="0 0 10 8"><path d="M1 2L5 6L9 2" fill="none" stroke="#555" strokeWidth="1.2" /></svg>
          </FootprintSelect>
          <FootprintDrawing />
        </RightPane>
      </DialogBody>
      <DialogFoot>
        <CheckLabel $mr={35}>
          <CheckBox />
          Place repeated copies
        </CheckLabel>
        <CheckLabel>
          <CheckBox>
            <svg width="11" height="11" viewBox="0 0 11 11"><path d="M1.5 5.5L4.5 8.5L9.5 1.5" fill="none" stroke="#333" strokeWidth="1.1" /></svg>
          </CheckBox>
          Place all units
        </CheckLabel>
        <PushButton $primary $ml="auto">OK</PushButton>
        <PushButton $ml="11px">Cancel</PushButton>
      </DialogFoot>
    </Dialog>
  </Page>
);

export default App;
